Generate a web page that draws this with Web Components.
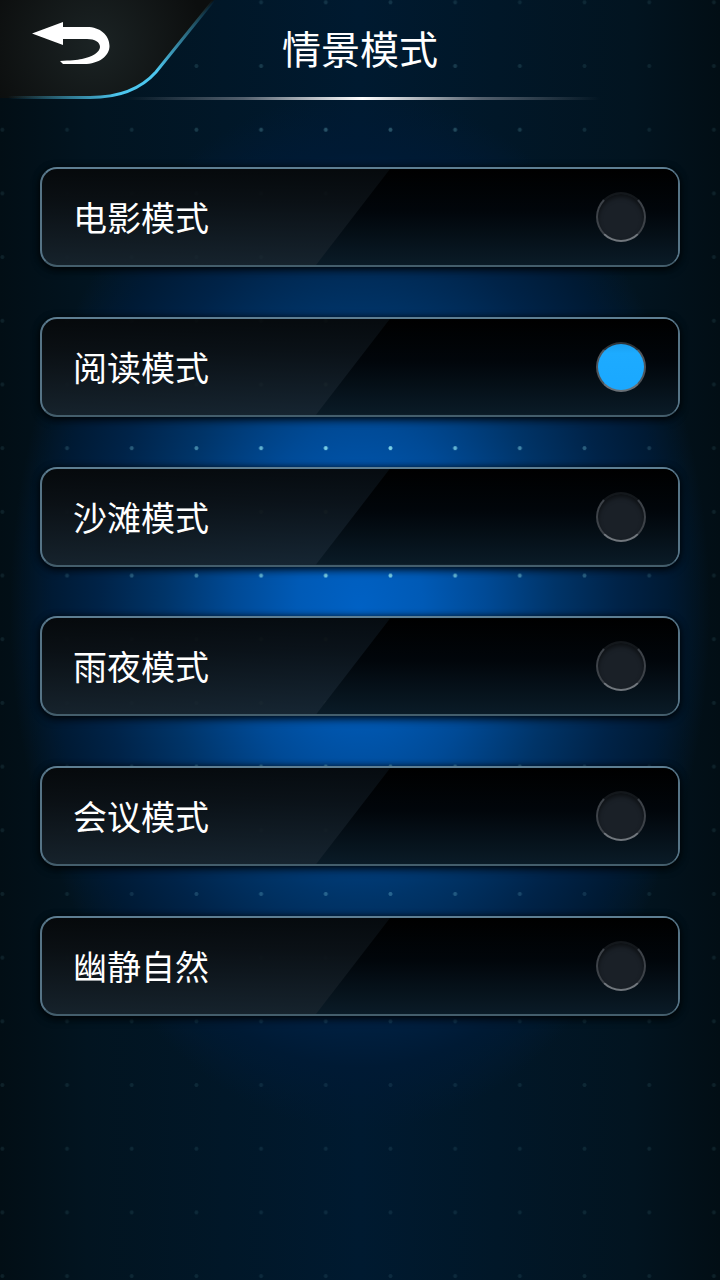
<!DOCTYPE html>
<html lang="zh">
<head>
<meta charset="utf-8">
<title>情景模式</title>
<style>
  html, body { margin: 0; padding: 0; }
  body {
    width: 720px;
    height: 1280px;
    overflow: hidden;
    background: #010f18;
    font-family: "Noto Sans CJK SC", "Liberation Sans", sans-serif;
  }
</style>
</head>
<body>
<scene-screen>
  <scene-header slot="header">情景模式</scene-header>
  <scene-row>电影模式</scene-row>
  <scene-row active>阅读模式</scene-row>
  <scene-row>沙滩模式</scene-row>
  <scene-row>雨夜模式</scene-row>
  <scene-row>会议模式</scene-row>
  <scene-row>幽静自然</scene-row>
</scene-screen>

<script>
class SceneScreen extends HTMLElement {
  constructor() {
    super();
    this.attachShadow({ mode: "open" });
    this.shadowRoot.innerHTML = `
      <style>
        :host {
          display: block;
          position: relative;
          width: 720px;
          height: 1280px;
          overflow: hidden;
          background:
            radial-gradient(ellipse 350px 520px at 360px 610px,
              #0061c4 0%, #005ab6 18%, #004a96 36%, #003468 56%, #002348 74%, #001a34 88%, rgba(0,24,46,0) 100%),
            linear-gradient(90deg, #020e15 0%, #021420 12%, #001a30 50%, #021420 88%, #020e15 100%);
        }
        .dots {
          position: absolute;
          inset: 0;
          background-image: radial-gradient(circle at center, #8fe6f2 0, #8fe6f2 1.6px, rgba(143,230,242,0) 2.4px);
          background-size: 64.7px 63.7px;
          background-position: -30px -29.5px;
          -webkit-mask-image: radial-gradient(ellipse 340px 560px at 360px 510px,
            rgba(0,0,0,.95) 0%, rgba(0,0,0,.8) 22%, rgba(0,0,0,.42) 52%, rgba(0,0,0,.2) 78%, rgba(0,0,0,.09) 100%);
          mask-image: radial-gradient(ellipse 340px 560px at 360px 510px,
            rgba(0,0,0,.95) 0%, rgba(0,0,0,.8) 22%, rgba(0,0,0,.42) 52%, rgba(0,0,0,.2) 78%, rgba(0,0,0,.09) 100%);
        }
        .content { position: relative; }
        .list {
          display: flex;
          flex-direction: column;
          gap: 49.8px;
          padding: 67px 40px 0;
        }
      </style>
      <div class="dots"></div>
      <div class="content">
        <slot name="header"></slot>
        <div class="list"><slot></slot></div>
      </div>
    `;
  }
}

class SceneHeader extends HTMLElement {
  constructor() {
    super();
    this.attachShadow({ mode: "open" });
    this.shadowRoot.innerHTML = `
      <style>
        :host {
          display: flex;
          justify-content: center;
          position: relative;
          height: 100px;
          color: #fff;
        }
        .title {
          font-size: 39px;
          line-height: 94px;
          font-weight: 400;
        }
        .rule {
          position: absolute;
          left: 125px;
          top: 97px;
          width: 475px;
          height: 3px;
          background: linear-gradient(90deg, rgba(160,165,175,0) 0%, rgba(150,155,165,.55) 25%, #fff 50%, rgba(150,155,165,.55) 75%, rgba(160,165,175,0) 100%);
        }
        svg {
          position: absolute;
          left: 0;
          top: 0;
        }
      </style>
      <svg width="230" height="102" viewBox="0 0 230 102">
        <defs>
          <radialGradient id="tab" gradientUnits="userSpaceOnUse" cx="95" cy="45" r="110">
            <stop offset="0" stop-color="#1b2324"/>
            <stop offset="1" stop-color="#0c0e0e"/>
          </radialGradient>
          <linearGradient id="edge" gradientUnits="userSpaceOnUse" x1="214" y1="0" x2="8" y2="98">
            <stop offset="0" stop-color="#4ec4ea" stop-opacity="0"/>
            <stop offset=".16" stop-color="#4ab6da" stop-opacity=".5"/>
            <stop offset=".36" stop-color="#4cc6ee"/>
            <stop offset=".56" stop-color="#4cc6ee"/>
            <stop offset=".75" stop-color="#3ea4c6" stop-opacity=".7"/>
            <stop offset="1" stop-color="#3ea4c6" stop-opacity="0"/>
          </linearGradient>
        </defs>
        <path d="M0 0H214L156 72C140 90 118 98 90 98H0Z" fill="url(#tab)"/>
        <path d="M214 0L156 72C140 90 118 97.5 90 97.5H8" fill="none" stroke="url(#edge)" stroke-width="3"/>
        <path d="M32 33.500L63 22V27H87C100 27 109.500 35 109.500 46C109.500 56 99 64 84 64H63L60 61C70 60.500 77 60 82 59C92 57 100 52 100 47C100 42 95 39 87 39H63V45Z" fill="#fff"/>
      </svg>
      <div class="title"><slot></slot></div>
      <div class="rule"></div>
    `;
  }
}

class SceneRow extends HTMLElement {
  constructor() {
    super();
    this.attachShadow({ mode: "open" });
    this.shadowRoot.innerHTML = `
      <style>
        :host {
          display: flex;
          align-items: center;
          justify-content: space-between;
          position: relative;
          box-sizing: border-box;
          height: 100px;
          padding: 0 32px 0 31px;
          border: 2.500px solid;
          border-color: #5d7e92 #567486 #445e6c;
          border-radius: 17px;
          background: linear-gradient(180deg, rgba(6,9,11,.97) 0%, rgba(11,16,20,.96) 35%, rgba(23,35,44,.95) 100%);
          box-shadow: 0 3px 8px rgba(0,0,0,.75), 0 0 6px rgba(0,0,0,.5);
          color: #fff;
          font-size: 34px;
        }
        .shade {
          position: absolute;
          inset: 0;
          border-radius: 14px;
          background: linear-gradient(180deg, #000 0%, #01060b 45%, #0a1b27 100%);
          clip-path: polygon(348px 0, 100% 0, 100% 100%, 274px 100%);
        }
        .label { position: relative; line-height: 94px; }
        .lamp {
          position: relative;
          box-sizing: border-box;
          width: 50px;
          height: 50px;
          border-radius: 50%;
          border: 2px solid;
          border-color: #14181c #3d4248 #70767c;
          background: #1a2027;
          box-shadow: inset 0 3px 4px rgba(0,0,0,.5);
        }
        :host([active]) .lamp {
          border-color: #2e343a #50565c #6a7076;
          background: linear-gradient(180deg, #1a9fef 0%, #1dabff 20%, #1aa8ff 100%);
          box-shadow: none;
        }
      </style>
      <div class="shade"></div>
      <div class="label"><slot></slot></div>
      <div class="lamp"></div>
    `;
  }
}

customElements.define("scene-screen", SceneScreen);
customElements.define("scene-header", SceneHeader);
customElements.define("scene-row", SceneRow);
</script>
</body>
</html>
